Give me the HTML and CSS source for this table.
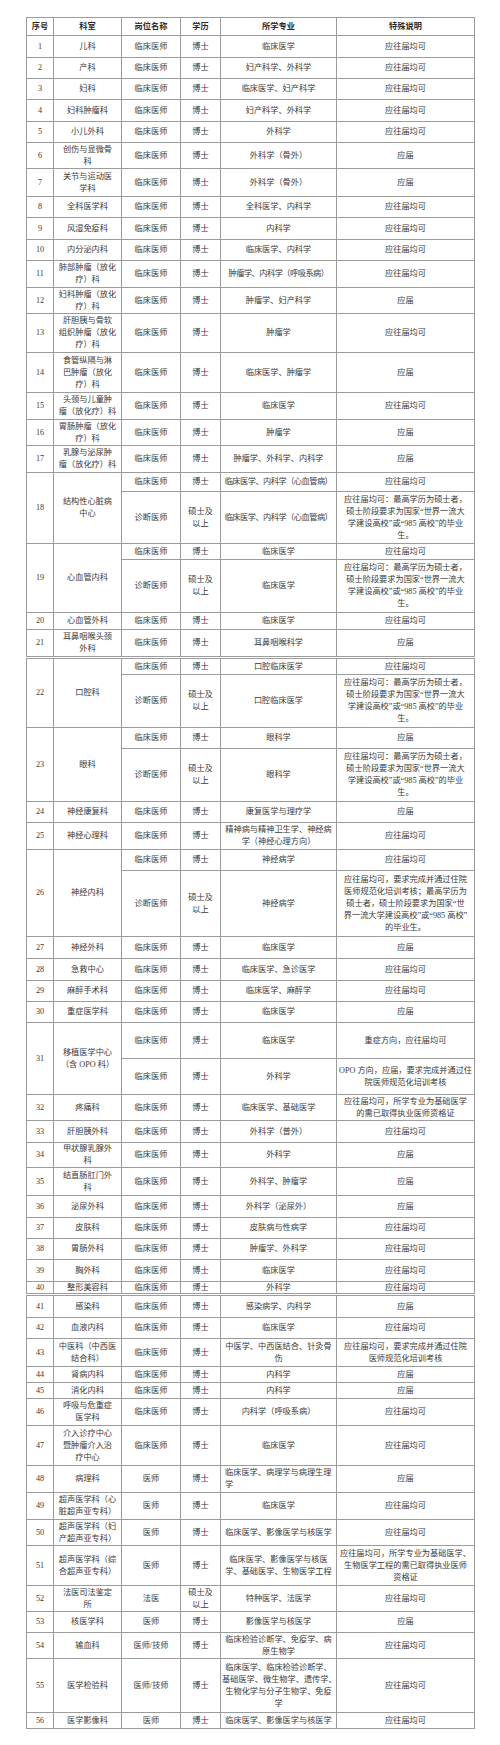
FILE: index.html
```html
<!DOCTYPE html>
<html lang="zh-CN">
<head>
<meta charset="utf-8">
<title>招聘岗位表</title>
<link rel="stylesheet" href="styles.css">
</head>
<body>
<div class="page">
<table class="grid">
<colgroup><col class="c1"><col class="c2"><col class="c3"><col class="c4"><col class="c5"><col class="c6"></colgroup>
<tr class="h18 head"><td>序号</td><td>科室</td><td>岗位名称</td><td>学历</td><td>所学专业</td><td>特殊说明</td></tr>
<tr class="h22"><td>1</td><td>儿科</td><td>临床医师</td><td>博士</td><td>临床医学</td><td>应往届均可</td></tr>
<tr class="h21"><td>2</td><td>产科</td><td>临床医师</td><td>博士</td><td>妇产科学、外科学</td><td>应往届均可</td></tr>
<tr class="h21"><td>3</td><td>妇科</td><td>临床医师</td><td>博士</td><td>临床医学、妇产科学</td><td>应往届均可</td></tr>
<tr class="h22"><td>4</td><td>妇科肿瘤科</td><td>临床医师</td><td>博士</td><td>妇产科学、外科学</td><td>应往届均可</td></tr>
<tr class="h21"><td>5</td><td>小儿外科</td><td>临床医师</td><td>博士</td><td>外科学</td><td>应往届均可</td></tr>
<tr class="h26"><td>6</td><td>创伤与显微骨<br>科</td><td>临床医师</td><td>博士</td><td>外科学（骨外）</td><td>应届</td></tr>
<tr class="h28"><td>7</td><td>关节与运动医<br>学科</td><td>临床医师</td><td>博士</td><td>外科学（骨外）</td><td>应届</td></tr>
<tr class="h21"><td>8</td><td>全科医学科</td><td>临床医师</td><td>博士</td><td>全科医学、内科学</td><td>应往届均可</td></tr>
<tr class="h22"><td>9</td><td>风湿免疫科</td><td>临床医师</td><td>博士</td><td>内科学</td><td>应往届均可</td></tr>
<tr class="h21"><td>10</td><td>内分泌内科</td><td>临床医师</td><td>博士</td><td>临床医学、内科学</td><td>应往届均可</td></tr>
<tr class="h27"><td>11</td><td>肺部肿瘤（放化<br>疗）科</td><td>临床医师</td><td>博士</td><td class="tight">肿瘤学、内科学（呼吸系病）</td><td>应往届均可</td></tr>
<tr class="h26"><td>12</td><td>妇科肿瘤（放化<br>疗）科</td><td>临床医师</td><td>博士</td><td>肿瘤学、妇产科学</td><td>应届</td></tr>
<tr class="h39"><td>13</td><td>肝胆胰与骨软<br>组织肿瘤（放化<br>疗）科</td><td>临床医师</td><td>博士</td><td>肿瘤学</td><td>应往届均可</td></tr>
<tr class="h40"><td>14</td><td>食管纵隔与淋<br>巴肿瘤（放化<br>疗）科</td><td>临床医师</td><td>博士</td><td>临床医学、肿瘤学</td><td>应届</td></tr>
<tr class="h27"><td>15</td><td>头颈与儿童肿<br>瘤（放化疗）科</td><td>临床医师</td><td>博士</td><td>临床医学</td><td>应往届均可</td></tr>
<tr class="h26"><td>16</td><td>胃肠肿瘤（放化<br>疗）科</td><td>临床医师</td><td>博士</td><td>肿瘤学</td><td>应届</td></tr>
<tr class="h27"><td>17</td><td>乳腺与泌尿肿<br>瘤（放化疗）科</td><td>临床医师</td><td>博士</td><td>肿瘤学、外科学、内科学</td><td>应届</td></tr>
<tr class="h19"><td rowspan="2">18</td><td rowspan="2">结构性心脏病<br>中心</td><td>临床医师</td><td>博士</td><td class="tight">临床医学、内科学（心血管病）</td><td>应往届均可</td></tr>
<tr class="h52"><td>诊断医师</td><td>硕士及<br>以上</td><td class="tight">临床医学、内科学（心血管病）</td><td>应往届均可：最高学历为硕士者，<br>硕士阶段要求为国家“世界一流大<br>学建设高校”或“985 高校”的毕业<br>生。</td></tr>
<tr class="h16"><td rowspan="2">19</td><td rowspan="2">心血管内科</td><td>临床医师</td><td>博士</td><td>临床医学</td><td>应往届均可</td></tr>
<tr class="h53"><td>诊断医师</td><td>硕士及<br>以上</td><td>临床医学</td><td>应往届均可：最高学历为硕士者，<br>硕士阶段要求为国家“世界一流大<br>学建设高校”或“985 高校”的毕业<br>生。</td></tr>
<tr class="h17"><td>20</td><td>心血管外科</td><td>临床医师</td><td>博士</td><td>临床医学</td><td>应往届均可</td></tr>
<tr class="h27"><td>21</td><td>耳鼻咽喉头颈<br>外科</td><td>临床医师</td><td>博士</td><td>耳鼻咽喉科学</td><td>应届</td></tr>
</table>

<table class="grid">
<colgroup><col class="c1"><col class="c2"><col class="c3"><col class="c4"><col class="c5"><col class="c6"></colgroup>
<tr class="h16"><td rowspan="2">22</td><td rowspan="2">口腔科</td><td>临床医师</td><td>博士</td><td>口腔临床医学</td><td>应往届均可</td></tr>
<tr class="h53"><td>诊断医师</td><td>硕士及<br>以上</td><td>口腔临床医学</td><td>应往届均可：最高学历为硕士者，<br>硕士阶段要求为国家“世界一流大<br>学建设高校”或“985 高校”的毕业<br>生。</td></tr>
<tr class="h21"><td rowspan="2">23</td><td rowspan="2">眼科</td><td>临床医师</td><td>博士</td><td>眼科学</td><td>应届</td></tr>
<tr class="h53"><td>诊断医师</td><td>硕士及<br>以上</td><td>眼科学</td><td>应往届均可：最高学历为硕士者，<br>硕士阶段要求为国家“世界一流大<br>学建设高校”或“985 高校”的毕业<br>生。</td></tr>
<tr class="h21"><td>24</td><td>神经康复科</td><td>临床医师</td><td>博士</td><td>康复医学与理疗学</td><td>应届</td></tr>
<tr class="h27"><td>25</td><td>神经心理科</td><td>临床医师</td><td>博士</td><td>精神病与精神卫生学、神经病<br>学（神经心理方向）</td><td>应往届均可</td></tr>
<tr class="h21"><td rowspan="2">26</td><td rowspan="2">神经内科</td><td>临床医师</td><td>博士</td><td>神经病学</td><td>应往届均可</td></tr>
<tr class="h66"><td>诊断医师</td><td>硕士及<br>以上</td><td>神经病学</td><td>应往届均可，要求完成并通过住院<br>医师规范化培训考核；最高学历为<br>硕士者，硕士阶段要求为国家“世<br>界一流大学建设高校”或“985 高校”<br>的毕业生。</td></tr>
<tr class="h22"><td>27</td><td>神经外科</td><td>临床医师</td><td>博士</td><td>临床医学</td><td>应届</td></tr>
<tr class="h22"><td>28</td><td>急救中心</td><td>临床医师</td><td>博士</td><td>临床医学、急诊医学</td><td>应往届均可</td></tr>
<tr class="h21"><td>29</td><td>麻醉手术科</td><td>临床医师</td><td>博士</td><td>临床医学、麻醉学</td><td>应往届均可</td></tr>
<tr class="h21"><td>30</td><td>重症医学科</td><td>临床医师</td><td>博士</td><td>临床医学</td><td>应届</td></tr>
<tr class="h36"><td rowspan="2">31</td><td rowspan="2">移植医学中心<br>（含 OPO 科）</td><td>临床医师</td><td>博士</td><td>临床医学</td><td>重症方向，应往届均可</td></tr>
<tr class="h36"><td>临床医师</td><td>博士</td><td>外科学</td><td>OPO 方向，应届，要求完成并通过住<br>院医师规范化培训考核</td></tr>
<tr class="h26"><td>32</td><td>疼痛科</td><td>临床医师</td><td>博士</td><td>临床医学、基础医学</td><td>应往届均可，所学专业为基础医学<br>的需已取得执业医师资格证</td></tr>
<tr class="h22"><td>33</td><td>肝胆胰外科</td><td>临床医师</td><td>博士</td><td>外科学（普外）</td><td>应往届均可</td></tr>
<tr class="h25"><td>34</td><td>甲状腺乳腺外<br>科</td><td>临床医师</td><td>博士</td><td>外科学</td><td>应届</td></tr>
<tr class="h28"><td>35</td><td>结直肠肛门外<br>科</td><td>临床医师</td><td>博士</td><td>外科学、肿瘤学</td><td>应届</td></tr>
<tr class="h22"><td>36</td><td>泌尿外科</td><td>临床医师</td><td>博士</td><td>外科学（泌尿外）</td><td>应届</td></tr>
<tr class="h21"><td>37</td><td>皮肤科</td><td>临床医师</td><td>博士</td><td>皮肤病与性病学</td><td>应往届均可</td></tr>
<tr class="h21"><td>38</td><td>胃肠外科</td><td>临床医师</td><td>博士</td><td>肿瘤学、外科学</td><td>应往届均可</td></tr>
<tr class="h22"><td>39</td><td>胸外科</td><td>临床医师</td><td>博士</td><td>临床医学</td><td>应往届均可</td></tr>
<tr class="h12"><td>40</td><td>整形美容科</td><td>临床医师</td><td>博士</td><td>外科学</td><td>应往届均可</td></tr>
</table>

<table class="grid">
<colgroup><col class="c1"><col class="c2"><col class="c3"><col class="c4"><col class="c5"><col class="c6"></colgroup>
<tr class="h22"><td>41</td><td>感染科</td><td>临床医师</td><td>博士</td><td>感染病学、内科学</td><td>应届</td></tr>
<tr class="h21"><td>42</td><td>血液内科</td><td>临床医师</td><td>博士</td><td>临床医学</td><td>应往届均可</td></tr>
<tr class="h28"><td>43</td><td>中医科（中西医<br>结合科）</td><td>临床医师</td><td>博士</td><td>中医学、中西医结合、针灸骨<br>伤</td><td>应往届均可，要求完成并通过住院<br>医师规范化培训考核</td></tr>
<tr class="h16"><td>44</td><td>肾病内科</td><td>临床医师</td><td>博士</td><td>内科学</td><td>应届</td></tr>
<tr class="h16"><td>45</td><td>消化内科</td><td>临床医师</td><td>博士</td><td>内科学</td><td>应届</td></tr>
<tr class="h27"><td>46</td><td>呼吸与危重症<br>医学科</td><td>临床医师</td><td>博士</td><td>内科学（呼吸系病）</td><td>应往届均可</td></tr>
<tr class="h40"><td>47</td><td>介入诊疗中心<br>暨肿瘤介入治<br>疗中心</td><td>临床医师</td><td>博士</td><td>临床医学</td><td>应往届均可</td></tr>
<tr class="h27"><td>48</td><td>病理科</td><td>医师</td><td>博士</td><td class="left">临床医学、病理学与病理生理<br>学</td><td>应届</td></tr>
<tr class="h27"><td>49</td><td>超声医学科（心<br>脏超声亚专科）</td><td>医师</td><td>博士</td><td>临床医学</td><td>应往届均可</td></tr>
<tr class="h26"><td>50</td><td>超声医学科（妇<br>产超声亚专科）</td><td>医师</td><td>博士</td><td>临床医学、影像医学与核医学</td><td>应往届均可</td></tr>
<tr class="h40"><td>51</td><td>超声医学科（综<br>合超声亚专科）</td><td>医师</td><td>博士</td><td>临床医学、影像医学与核医<br>学、基础医学、生物医学工程</td><td>应往届均可，所学专业为基础医学、<br>生物医学工程的需已取得执业医师<br>资格证</td></tr>
<tr class="h26"><td>52</td><td>法医司法鉴定<br>所</td><td>法医</td><td>硕士及<br>以上</td><td>特种医学、法医学</td><td>应往届均可</td></tr>
<tr class="h21"><td>53</td><td>核医学科</td><td>医师</td><td>博士</td><td>影像医学与核医学</td><td>应届</td></tr>
<tr class="h26"><td>54</td><td>输血科</td><td>医师/技师</td><td>博士</td><td>临床检验诊断学、免疫学、病<br>原生物学</td><td>应往届均可</td></tr>
<tr class="h54"><td>55</td><td>医学检验科</td><td>医师/技师</td><td>博士</td><td>临床医学、临床检验诊断学、<br>基础医学、微生物学、遗传学、<br>生物化学与分子生物学、免疫<br>学</td><td>应往届均可</td></tr>
<tr class="h16"><td>56</td><td>医学影像科</td><td>医师</td><td>博士</td><td>临床医学、影像医学与核医学</td><td>应往届均可</td></tr>
</table>
</div>
</body>
</html>
```

FILE: styles.css
```css
html, body {
  margin: 0;
  padding: 0;
  background: #ffffff;
}

.page {
  display: flex;
  flex-direction: column;
  gap: 1px;
  padding: 17px 0 0 26px;
  width: 449px;
}

.grid {
  border-collapse: collapse;
  table-layout: fixed;
  width: 448px;
}

.c1 { width: 27px; }
.c2 { width: 68px; }
.c3 { width: 59px; }
.c4 { width: 40px; }
.c5 { width: 116px; }
.c6 { width: 138px; }

.grid td {
  border: 1px solid #9c9c9c;
  padding: 0 1px;
  text-align: center;
  vertical-align: middle;
  white-space: nowrap;
  overflow: hidden;
  font-family: "Liberation Serif", "Noto Sans CJK SC", serif;
  font-size: 8.2px;
  line-height: 12px;
  color: #3a3a3a;
}

.grid .head td {
  font-weight: bold;
  color: #2a2a2a;
}

.grid td.tight {
  letter-spacing: -0.5px;
}

.grid td.left {
  text-align: left;
  padding-left: 4px;
}

.h12 { height: 12px; }
.h12 td { line-height: 10px; }
.h16 { height: 16px; }
.h17 { height: 17px; }
.h18 { height: 18px; }
.h19 { height: 19px; }
.h21 { height: 21px; }
.h22 { height: 22px; }
.h25 { height: 25px; }
.h26 { height: 26px; }
.h27 { height: 27px; }
.h28 { height: 28px; }
.h36 { height: 36px; }
.h39 { height: 39px; }
.h40 { height: 40px; }
.h52 { height: 52px; }
.h53 { height: 53px; }
.h54 { height: 54px; }
.h66 { height: 66px; }
```
